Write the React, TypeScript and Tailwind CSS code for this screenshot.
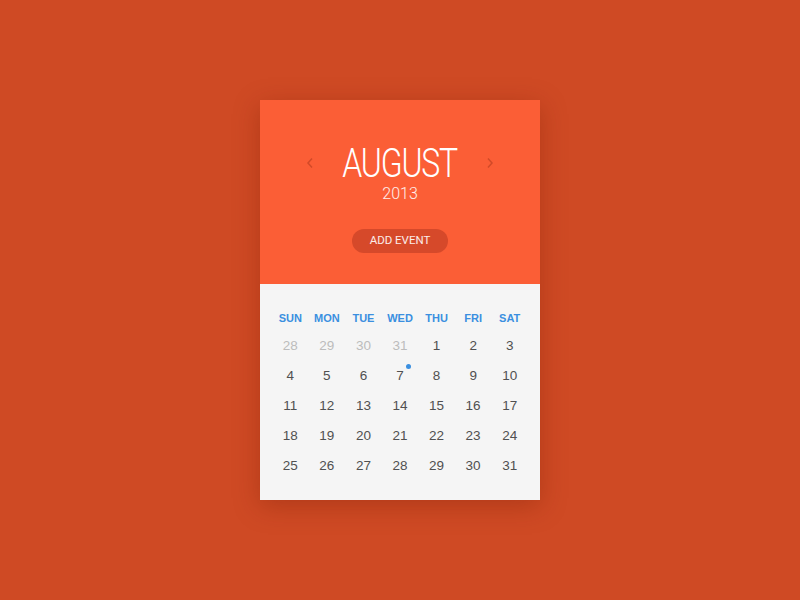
import React from "react";

const weekdays = ["SUN", "MON", "TUE", "WED", "THU", "FRI", "SAT"];
const days: { n: number; faded?: boolean; dot?: boolean }[] = [
  { n: 28, faded: true },
  { n: 29, faded: true },
  { n: 30, faded: true },
  { n: 31, faded: true },
  ...Array.from({ length: 31 }, (_, i) => ({ n: i + 1, dot: i + 1 === 7 })),
];

export default function App() {
  return (
    <div className="w-[800px] h-[600px] bg-[#cf4a24] flex items-center justify-center" style={{ fontFamily: "'Liberation Sans', Arial, sans-serif" }}>
      <div className="w-[280px] h-[400px] flex flex-col shadow-[0_6px_24px_rgba(120,30,5,0.35)]">
        <div className="h-[184px] bg-[#fb5e36] flex flex-col items-center pt-[47px]">
          <div className="flex items-center">
            <svg width="8" height="12" viewBox="0 0 8 12" className="mr-[28px] mt-[-2px]">
              <path d="M6 1.5 L2 6 L6 10.5" fill="none" stroke="#d24a28" strokeWidth="1.5" />
            </svg>
            <div className="w-[116px] flex justify-center">
              <span className="whitespace-nowrap text-white text-[40px] leading-[34px] font-light tracking-[-1.5px] scale-x-[0.8] inline-block" style={{ fontFamily: "Roboto, sans-serif" }}>
                AUGUST
              </span>
            </div>
            <svg width="8" height="12" viewBox="0 0 8 12" className="ml-[28px] mt-[-2px]">
              <path d="M2 1.5 L6 6 L2 10.5" fill="none" stroke="#d24a28" strokeWidth="1.5" />
            </svg>
          </div>
          <div className="text-white/90 text-[16px] leading-[18px] font-light mt-[4px]" style={{ fontFamily: "Roboto, sans-serif" }}>
            2013
          </div>
          <button className="mt-[26px] w-[96px] h-[24px] rounded-full bg-[#d6492a] text-white/90 text-[11.5px] font-normal flex items-center justify-center" style={{ fontFamily: "Roboto, sans-serif" }}>
            ADD EVENT
          </button>
        </div>
        <div className="flex-1 bg-[#f5f5f5] px-[12px] pt-[26px]">
          <div className="grid grid-cols-7">
            {weekdays.map((w) => (
              <div key={w} className="text-center text-[11px] font-bold text-[#3a8fe0] h-[16px] leading-[16px]">
                {w}
              </div>
            ))}
          </div>
          <div className="grid grid-cols-7 mt-[5px]">
            {days.map((d, i) => (
              <div key={i} className={`relative text-center h-[30px] leading-[30px] text-[13.5px] ${d.faded ? "text-[#bcbcbc]" : "text-[#505050]"}`}>
                <span className="relative">
                  {d.n}
                  {d.dot && <span className="absolute -right-[7px] -top-[4px] w-[5px] h-[5px] rounded-full bg-[#3a8fe0]" />}
                </span>
              </div>
            ))}
          </div>
        </div>
      </div>
    </div>
  );
}
